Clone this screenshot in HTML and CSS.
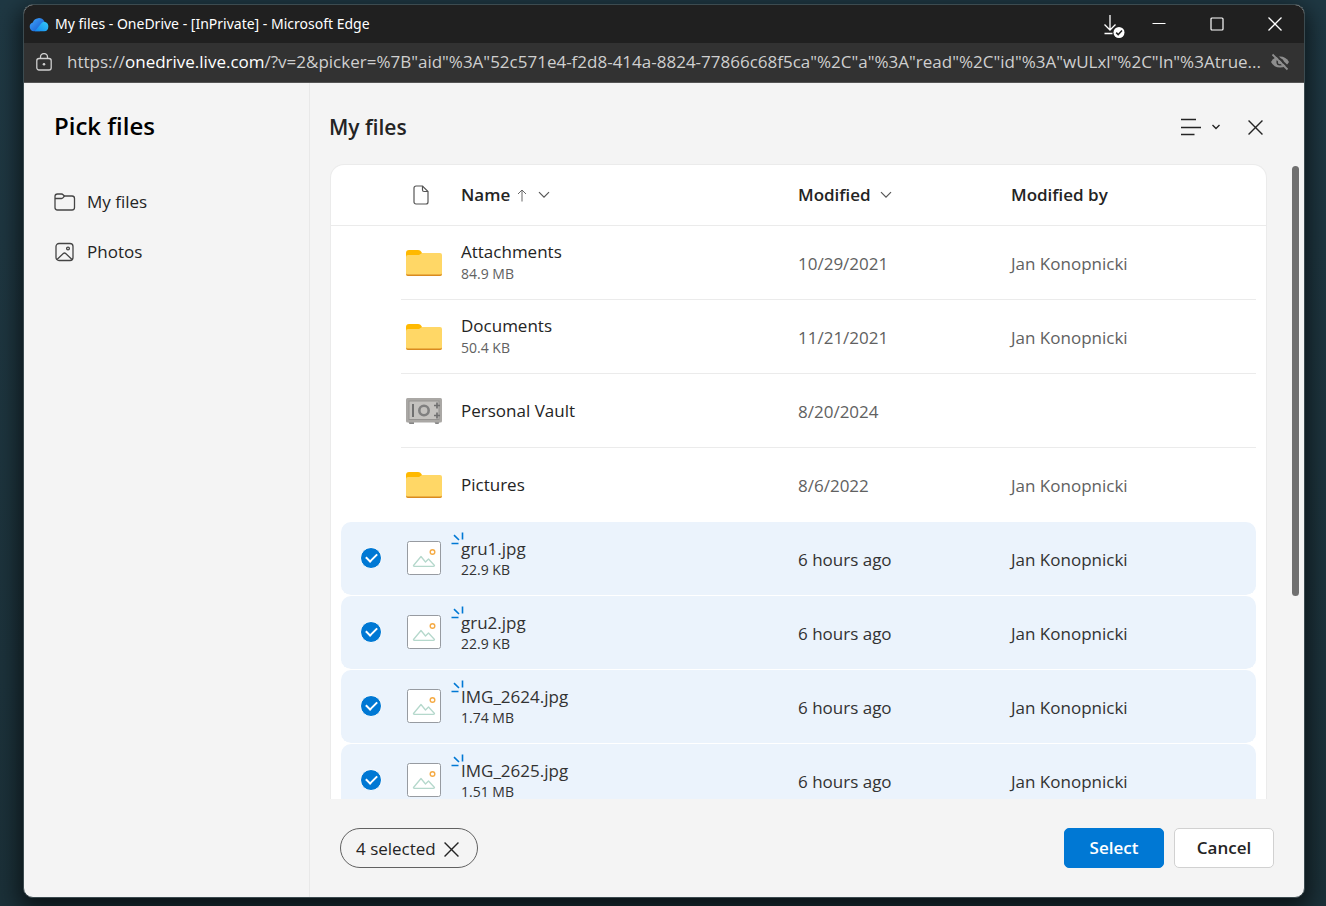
FILE: index.html
```html
<!DOCTYPE html>
<html lang="en">
<head>
    <meta charset="UTF-8">
    <meta name="viewport" content="width=device-width, initial-scale=1.0">
    <title>My files - OneDrive</title>
    <link rel="stylesheet" href="styles.css">
</head>
<body>
    <!-- shared icons -->
    <svg class="sprite" aria-hidden="true">
        <symbol id="folder" viewBox="0 0 36 26">
            <path d="M0 3a3 3 0 0 1 3-3h9c2 0 3 1 4 3v5H0z" fill="#ffb900"/>
            <path d="M0 7q0-2 2-2h11l3-2h18q2 0 2 2v19q0 2-2 2H2q-2 0-2-2z" fill="#ffd766"/>
            <path d="M0 23.500q0 2.500 2 2.500h32q2 0 2-2.500q-.5 1-2 1H2q-1.500 0-2-1z" fill="#d98a1f"/>
        </symbol>
        <symbol id="picture" viewBox="0 0 34 34">
            <rect x=".5" y=".5" width="33" height="33" rx="2" fill="#fff" stroke="#979ba1"/>
            <circle cx="25.500" cy="11" r="2.300" fill="none" stroke="#f5ab45" stroke-width="1.400"/>
            <path d="M6.500 24.500 14 15.500l4.500 5.500 3-3 6 6.500q0 .8-1 .8H7.300q-1 0-.8-.8z" fill="none" stroke="#b5d8cc" stroke-width="1.300" stroke-linejoin="round"/>
        </symbol>
        <symbol id="flare" viewBox="0 0 13 13">
            <path d="M.5 11.500h7M3 3.200l5 4.800M11.500.500v7" fill="none" stroke="#0078d4" stroke-width="1.600"/>
        </symbol>
        <symbol id="chevron" viewBox="0 0 12 8">
            <path d="m1 1.200 5 5 5-5" fill="none" stroke="#555" stroke-width="1.200"/>
        </symbol>
        <symbol id="cross" viewBox="0 0 14 14">
            <path d="m.5.500 13 13M13.500.500l-13 13" fill="none" stroke="currentColor" stroke-width="1.300"/>
        </symbol>
    </svg>

    <div class="window">
        <header class="titlebar">
            <svg class="cloud" viewBox="0 0 19 14" aria-hidden="true">
                <defs>
                    <linearGradient id="cloudLeft" x1="0" y1="0" x2="1" y2="1">
                        <stop offset="0" stop-color="#3fa9ff"/>
                        <stop offset="1" stop-color="#1551c9"/>
                    </linearGradient>
                    <linearGradient id="cloudRight" x1="0" y1="1" x2="1" y2="0">
                        <stop offset="0" stop-color="#1287ee"/>
                        <stop offset="1" stop-color="#35c8f7"/>
                    </linearGradient>
                </defs>
                <path d="M4.500 13.500A4.400 4.400 0 0 1 3.600 5 6 6 0 0 1 14.500 4l-4 9.500z" fill="url(#cloudLeft)"/>
                <path d="M5.500 13.500 12 5.600q1.200-1.400 2.800-1.300a4.700 4.700 0 0 1-.3 9.200z" fill="url(#cloudRight)"/>
            </svg>
            <span class="titlebar-text">My files - OneDrive - [InPrivate] - Microsoft Edge</span>
            <div class="window-buttons">
                <button type="button" class="downloads" aria-label="Downloads">
                    <svg width="22" height="24" viewBox="0 0 22 24" fill="none" stroke="#fff" stroke-width="1.300">
                        <path d="M7 1v15M1.500 10.500 7 16l5.500-5.500M1.500 19.500h8"/>
                        <circle cx="16" cy="18.500" r="5.500" fill="#fff" stroke="none"/>
                        <path d="m13.200 18.600 2 2 3.800-4" stroke="#222" stroke-width="1.500"/>
                    </svg>
                </button>
                <button type="button" aria-label="Minimize">
                    <svg width="14" height="14" viewBox="0 0 14 14"><path d="M.5 6.500h13" stroke="#fff"/></svg>
                </button>
                <button type="button" aria-label="Maximize">
                    <svg width="14" height="14" viewBox="0 0 14 14"><rect x="1" y="1" width="12" height="12" rx="1" fill="none" stroke="#fff" stroke-width="1.200"/></svg>
                </button>
                <button type="button" aria-label="Close window">
                    <svg width="14" height="14"><use href="#cross"/></svg>
                </button>
            </div>
        </header>

        <div class="addressbar">
            <svg class="lock" width="16" height="18" viewBox="0 0 16 18" fill="none" stroke="#cfcfcf" stroke-width="1.300" aria-hidden="true">
                <rect x=".8" y="5.500" width="14.400" height="11.500" rx="2.200"/>
                <path d="M4.500 5.500V4a3.500 3.500 0 0 1 7 0v1.500"/>
                <circle cx="8" cy="11.200" r="1.300" fill="#cfcfcf" stroke="none"/>
            </svg>
            <span class="url">https://<b>onedrive.live.com</b>/?v=2&amp;picker=%7B"aid"%3A"52c571e4-f2d8-414a-8824-77866c68f5ca"%2C"a"%3A"read"%2C"id"%3A"wULxl"%2C"ln"%3Atrue...</span>
            <svg width="18" height="18" viewBox="0 0 18 18" fill="none" aria-hidden="true">
                <path d="M0 9q3-5.500 9-5.500T18 9q-3 5.500-9 5.500T0 9z" fill="#8e8e8e"/>
                <circle cx="9" cy="9" r="3.600" fill="#333"/>
                <circle cx="9" cy="9" r="2.200" fill="#8e8e8e"/>
                <path d="m3.500.500 14 14" stroke="#333" stroke-width="2"/>
                <path d="m1.500 1.500 15 15" stroke="#8e8e8e" stroke-width="1.800"/>
            </svg>
        </div>

        <div class="picker">
            <nav class="sidebar">
                <h1>Pick files</h1>
                <a href="#files">
                    <svg width="22" height="20" viewBox="0 0 22 20" fill="none" stroke="#444" stroke-width="1.300" aria-hidden="true">
                        <path d="M1 4.500A2.500 2.500 0 0 1 3.500 2h4q1 0 1.600.8L10.500 4H18a2.500 2.500 0 0 1 2.500 2.500v9A2.500 2.500 0 0 1 18 18H3.500A2.500 2.500 0 0 1 1 15.500z"/>
                        <path d="M1 6.500h6.500q1 0 1.600-.8L10.500 4"/>
                    </svg>
                    My files
                </a>
                <a href="#photos">
                    <svg width="22" height="20" viewBox="0 0 22 20" fill="none" stroke="#444" stroke-width="1.300" aria-hidden="true">
                        <rect x="2" y="1.500" width="17" height="17" rx="3"/>
                        <circle cx="14" cy="6.500" r="1.400"/>
                        <path d="m3 17.500 6.300-6q1.200-1 2.400 0l6.300 6"/>
                    </svg>
                    Photos
                </a>
            </nav>

            <main class="content">
                <div class="content-header">
                    <h2>My files</h2>
                    <button type="button" class="view-button" aria-label="View options">
                        <svg width="22" height="18" viewBox="0 0 22 18" stroke="#242424" stroke-width="1.400"><path d="M1 1.500h15M1 9.500h20M1 16.500h13.500"/></svg>
                        <svg width="8" height="6" viewBox="0 0 8 6" fill="none" stroke="#242424" stroke-width="1.400"><path d="m.5 1 3.500 3.500L7.500 1"/></svg>
                    </button>
                    <button type="button" class="close-button" aria-label="Close">
                        <svg width="15" height="15"><use href="#cross"/></svg>
                    </button>
                </div>

                <div class="list-area">
                    <div class="list">
                        <table>
                            <thead>
                                <tr>
                                    <td></td>
                                    <th scope="col" aria-label="File type">
                                        <svg class="type-icon" width="16" height="20" viewBox="0 0 16 20" fill="none" stroke="#555" stroke-width="1.200">
                                            <path d="M3 1h6.500L15 6.500V17a2 2 0 0 1-2 2H3a2 2 0 0 1-2-2V3a2 2 0 0 1 2-2z"/>
                                            <path d="M9.500 1v4q0 1.500 1.500 1.500h4"/>
                                        </svg>
                                    </th>
                                    <th scope="col">
                                        <button type="button">Name
                                            <svg class="sort" width="10" height="13" viewBox="0 0 10 13" fill="none" stroke="#666"><path d="M5 12.500V1M1 5l4-4 4 4"/></svg>
                                            <svg width="12" height="8"><use href="#chevron"/></svg>
                                        </button>
                                    </th>
                                    <th scope="col">
                                        <button type="button">Modified
                                            <svg width="12" height="8"><use href="#chevron"/></svg>
                                        </button>
                                    </th>
                                    <th scope="col"><button type="button">Modified by</button></th>
                                </tr>
                            </thead>
                            <tbody>
                                <tr>
                                    <td></td>
                                    <td class="icon"><svg width="36" height="26"><use href="#folder"/></svg></td>
                                    <td class="name">Attachments<small>84.9 MB</small></td>
                                    <td>10/29/2021</td>
                                    <td>Jan Konopnicki</td>
                                </tr>
                                <tr>
                                    <td></td>
                                    <td class="icon"><svg width="36" height="26"><use href="#folder"/></svg></td>
                                    <td class="name">Documents<small>50.4 KB</small></td>
                                    <td>11/21/2021</td>
                                    <td>Jan Konopnicki</td>
                                </tr>
                                <tr>
                                    <td></td>
                                    <td class="icon">
                                        <svg width="36" height="26" viewBox="0 0 36 26">
                                            <path d="M2 23h6v3H3.500zM28 23h6l-1.500 3h-3z" fill="#858585"/>
                                            <rect width="36" height="24.500" rx="1.500" fill="#aaa8a5"/>
                                            <rect x="3" y="3" width="30" height="18.500" fill="#c4c2bf" stroke="#959391"/>
                                            <path d="M7 6v13" stroke="#707070" stroke-width="2"/>
                                            <circle cx="18" cy="12.500" r="4.700" fill="none" stroke="#808080" stroke-width="2.600"/>
                                            <path d="M28 7.500h6M28 17.500h6M31 4.500v6M31 14.500v6" stroke="#707070" stroke-width="1.700"/>
                                        </svg>
                                    </td>
                                    <td class="name">Personal Vault</td>
                                    <td>8/20/2024</td>
                                    <td></td>
                                </tr>
                                <tr>
                                    <td></td>
                                    <td class="icon"><svg width="36" height="26"><use href="#folder"/></svg></td>
                                    <td class="name">Pictures</td>
                                    <td>8/6/2022</td>
                                    <td>Jan Konopnicki</td>
                                </tr>
                                <tr class="selected">
                                    <td class="check"><input type="checkbox" aria-label="gru1.jpg" checked></td>
                                    <td class="icon"><svg width="34" height="34"><use href="#picture"/></svg></td>
                                    <td class="name"><svg class="flare"><use href="#flare"/></svg>gru1.jpg<small>22.9 KB</small></td>
                                    <td>6 hours ago</td>
                                    <td>Jan Konopnicki</td>
                                </tr>
                                <tr class="selected">
                                    <td class="check"><input type="checkbox" aria-label="gru2.jpg" checked></td>
                                    <td class="icon"><svg width="34" height="34"><use href="#picture"/></svg></td>
                                    <td class="name"><svg class="flare"><use href="#flare"/></svg>gru2.jpg<small>22.9 KB</small></td>
                                    <td>6 hours ago</td>
                                    <td>Jan Konopnicki</td>
                                </tr>
                                <tr class="selected">
                                    <td class="check"><input type="checkbox" aria-label="IMG_2624.jpg" checked></td>
                                    <td class="icon"><svg width="34" height="34"><use href="#picture"/></svg></td>
                                    <td class="name"><svg class="flare"><use href="#flare"/></svg>IMG_2624.jpg<small>1.74 MB</small></td>
                                    <td>6 hours ago</td>
                                    <td>Jan Konopnicki</td>
                                </tr>
                                <tr class="selected">
                                    <td class="check"><input type="checkbox" aria-label="IMG_2625.jpg" checked></td>
                                    <td class="icon"><svg width="34" height="34"><use href="#picture"/></svg></td>
                                    <td class="name"><svg class="flare"><use href="#flare"/></svg>IMG_2625.jpg<small>1.51 MB</small></td>
                                    <td>6 hours ago</td>
                                    <td>Jan Konopnicki</td>
                                </tr>
                            </tbody>
                        </table>
                    </div>
                    <div class="scrollbar"><div class="thumb"></div></div>
                </div>

                <footer class="actions">
                    <button type="button" class="selection">4 selected
                        <svg width="15" height="15"><use href="#cross"/></svg>
                    </button>
                    <button type="button" class="btn primary">Select</button>
                    <button type="button" class="btn">Cancel</button>
                </footer>
            </main>
        </div>
    </div>
</body>
</html>
```
FILE: styles.css
```css
* {
    box-sizing: border-box;
}

body {
    margin: 0;
    height: 100vh;
    padding: 4px 21px 8px 23px;
    background: linear-gradient(#1f3843, #1b3038);
    font-family: "Open Sans", "Noto Sans", sans-serif;
    font-size: 17px;
    line-height: 22px;
    color: #242424;
    overflow: hidden;
}

button {
    font: inherit;
    color: inherit;
    background: none;
    border: none;
    padding: 0;
    cursor: pointer;
}

svg {
    display: block;
    flex-shrink: 0;
}

.sprite {
    display: none;
}

.window {
    display: flex;
    flex-direction: column;
    height: 100%;
    border: 1px solid #3c4b50;
    border-radius: 10px;
    overflow: hidden;
    background: #f4f4f4;
    box-shadow: 0 8px 22px 4px rgba(0, 0, 0, 0.6);
}

/* browser bars */
.titlebar {
    display: flex;
    align-items: center;
    height: 38px;
    flex-shrink: 0;
    padding-left: 5px;
    background: #202020;
    color: #fff;
}

.cloud {
    width: 20px;
    height: 15px;
    margin-right: 6px;
}

.titlebar-text {
    flex: 1;
    font-family: "Noto Sans", sans-serif;
    font-size: 14px;
    white-space: nowrap;
}

.window-buttons {
    display: flex;
    height: 100%;
}

.window-buttons button {
    display: flex;
    align-items: center;
    justify-content: center;
    width: 58px;
}

.window-buttons .downloads {
    width: 32px;
    padding-top: 4px;
}

.addressbar {
    display: flex;
    align-items: center;
    gap: 6px;
    height: 40px;
    flex-shrink: 0;
    padding: 0 15px 2px 12px;
    background: #323232;
    border-bottom: 1px solid #555;
    color: #cfcfcf;
}

.lock {
    margin-right: 9px;
}

.url {
    flex: 1;
    min-width: 0;
    overflow: hidden;
    white-space: nowrap;
}

.url b {
    font-weight: 400;
    color: #fff;
}

/* picker */
.picker {
    display: flex;
    flex: 1;
    min-height: 0;
}

.sidebar {
    width: 286px;
    flex-shrink: 0;
    padding: 27px 30px;
    border-right: 1px solid #e8e8e8;
}

.sidebar h1 {
    margin: 0 0 44px;
    font-size: 24px;
    line-height: 32px;
    font-weight: 600;
    color: #000;
}

.sidebar a {
    display: flex;
    align-items: center;
    gap: 11px;
    height: 50px;
    padding-bottom: 18px;
    color: inherit;
    text-decoration: none;
}

.content {
    display: flex;
    flex-direction: column;
    flex: 1;
    min-width: 0;
}

.content-header {
    display: flex;
    align-items: center;
    height: 81px;
    flex-shrink: 0;
    padding: 7px 41px 0 19px;
}

.content-header h2 {
    flex: 1;
    margin: 0;
    font-size: 21px;
    font-weight: 600;
}

.view-button {
    display: flex;
    align-items: center;
    gap: 10px;
    margin-right: 28px;
}

.list-area {
    display: flex;
    flex: 1;
    min-height: 0;
    padding: 0 5px 0 20px;
}

.list {
    flex: 1;
    min-width: 0;
    margin-right: 25px;
    background: #fff;
    border: 1px solid #ebebeb;
    border-bottom: none;
    border-radius: 14px 14px 0 0;
    overflow: hidden;
}

.scrollbar {
    width: 7px;
    padding-top: 2px;
}

.thumb {
    height: 68%;
    border-radius: 4px;
    background: #707070;
}

/* file table */
table,
thead,
tbody {
    display: block;
}

tr {
    display: grid;
    grid-template-columns: 60px 60px 337fr 213fr 245fr;
    height: 74px;
    margin: 0 10px;
}

td,
th {
    display: flex;
    align-items: center;
    padding: 2px 0 0;
    text-align: left;
    font-weight: 600;
}

thead {
    border-bottom: 1px solid #ebebeb;
}

thead tr {
    height: 60px;
}

thead th {
    padding: 0;
}

th button {
    display: flex;
    align-items: center;
    gap: 9px;
}

th .sort {
    margin: 0 2px 0 -2px;
}

.type-icon {
    margin-left: 12px;
}

tbody td {
    font-weight: 400;
    color: #616161;
    border-bottom: 1px solid #ebebeb;
}

tbody td:first-child,
tbody tr:nth-child(4) td,
.selected td {
    border-bottom: none;
}

tbody .icon {
    padding: 0 0 0 5px;
}

tbody .name {
    position: relative;
    flex-direction: column;
    align-items: flex-start;
    justify-content: center;
    padding: 0;
    color: #242424;
}

small {
    font-size: 14px;
    line-height: 22px;
    color: #616161;
}

.selected {
    border-bottom: 1px solid #fff;
    border-radius: 10px;
    background: #ebf3fc;
    background-clip: padding-box;
}

.selected td,
.selected small {
    color: #323232;
}

.selected small {
    line-height: 20px;
}

.selected .icon {
    padding: 0 0 2px 6px;
}

.selected .check {
    padding: 0 0 2px 19px;
}

.check input {
    appearance: none;
    display: flex;
    align-items: center;
    justify-content: center;
    width: 22px;
    height: 22px;
    margin: 0;
    border: 1px solid #fff;
    border-radius: 50%;
    background: #0078d4;
}

.check input::before {
    content: "";
    width: 5px;
    height: 9px;
    margin-bottom: 2px;
    border: solid #fff;
    border-width: 0 2px 2px 0;
    transform: rotate(45deg);
}

.flare {
    position: absolute;
    left: -10px;
    top: 10px;
    width: 13px;
    height: 13px;
}

/* bottom bar */
.actions {
    display: flex;
    align-items: center;
    gap: 10px;
    height: 98px;
    flex-shrink: 0;
    padding: 0 30px;
}

.selection {
    display: flex;
    align-items: center;
    gap: 8px;
    height: 40px;
    margin-right: auto;
    padding: 2px 18px 0 15px;
    border: 1px solid #616161;
    border-radius: 20px;
}

.btn {
    width: 100px;
    height: 40px;
    border: 1px solid #d1d1d1;
    border-radius: 5px;
    background: #fff;
    font-weight: 600;
}

.btn.primary {
    border-color: #0078d4;
    background: #0078d4;
    color: #fff;
}
```
